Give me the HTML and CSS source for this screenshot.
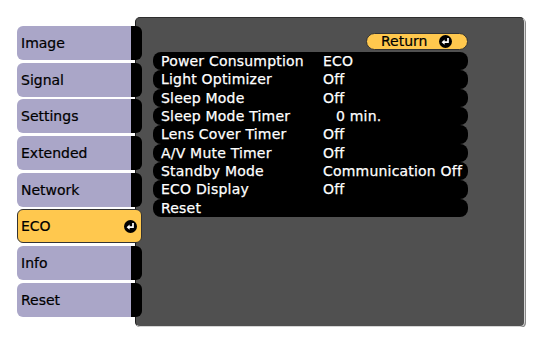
FILE: index.html
```html
<!DOCTYPE html>
<html lang="en">
<head>
  <meta charset="UTF-8">
  <title>ECO Menu</title>
  <link rel="stylesheet" href="styles.css">
</head>
<body>

  <div class="screen">
    <div class="tabs">
      <div class="tab">Image</div>
      <div class="tab">Signal</div>
      <div class="tab">Settings</div>
      <div class="tab">Extended</div>
      <div class="tab">Network</div>
      <div class="tab active">ECO
        <svg class="enter" viewBox="0 0 13 13" width="13" height="13">
          <circle cx="6.5" cy="6.5" r="6.5" fill="#000"/>
          <path d="M9 3 V7.2 H5" fill="none" stroke="#fff" stroke-width="1.7"/>
          <path d="M2.6 7.2 L5.6 4.6 L5.6 9.8 Z" fill="#fff"/>
        </svg>
      </div>
      <div class="tab">Info</div>
      <div class="tab">Reset</div>
    </div>

    <div class="panel">
      <div class="top">
        <div class="return">Return
          <svg class="enter" viewBox="0 0 13 13" width="13" height="13">
            <circle cx="6.5" cy="6.5" r="6.5" fill="#000"/>
            <path d="M9 3 V7.2 H5" fill="none" stroke="#fff" stroke-width="1.7"/>
            <path d="M2.6 7.2 L5.6 4.6 L5.6 9.8 Z" fill="#fff"/>
          </svg>
        </div>
      </div>
      <div class="rows">
        <div class="row"><span class="label">Power Consumption</span><span>ECO</span></div>
        <div class="row"><span class="label">Light Optimizer</span><span>Off</span></div>
        <div class="row"><span class="label">Sleep Mode</span><span>Off</span></div>
        <div class="row"><span class="label">Sleep Mode Timer</span><span class="num">0 min.</span></div>
        <div class="row"><span class="label">Lens Cover Timer</span><span>Off</span></div>
        <div class="row"><span class="label">A/V Mute Timer</span><span>Off</span></div>
        <div class="row"><span class="label">Standby Mode</span><span>Communication Off</span></div>
        <div class="row"><span class="label">ECO Display</span><span>Off</span></div>
        <div class="row"><span class="label">Reset</span><span></span></div>
      </div>
    </div>
  </div>

</body>
</html>
```

FILE: styles.css
```css
body {
  margin: 0;
  background: #fff;
  font-family: 'DejaVu Sans', sans-serif;
  font-size: 14px;
}

.screen {
  display: flex;
  margin: 17px 0 0 17px;
}

.tabs {
  position: relative;
  z-index: 1;
  width: 125px;
  padding-top: 9px;
  display: flex;
  flex-direction: column;
  gap: 2.7px;
}

.tab {
  position: relative;
  height: 34px;
  box-sizing: border-box;
  padding-left: 4px;
  display: flex;
  align-items: center;
  background: #aaa6c8;
  color: #000;
  border-radius: 6px 0 0 6px;
  margin-right: 9px;
  -webkit-text-stroke: 0.2px #000;
}

.tab::after {
  content: "";
  position: absolute;
  top: 0;
  bottom: 0;
  right: -9px;
  width: 11px;
  background: #000;
  border-radius: 0 6px 6px 0;
}

.tab.active {
  margin-right: 0;
  background: #ffc84e;
  border: 1px solid #333;
  border-radius: 6px;
  padding-left: 3px;
}

.tab.active::after {
  display: none;
}

.tab.active .enter {
  margin-left: auto;
  margin-right: 4px;
}

.panel {
  margin-left: -7px;
  width: 390px;
  height: 310px;
  box-sizing: border-box;
  background: #505050;
  border-top: 1px solid #2e2e2e;
  border-left: 1px solid #1c1c1c;
  border-right: 1px solid #d6d6d6;
  border-bottom: 1px solid #d6d6d6;
  border-radius: 5px;
  box-shadow: 1px 1px 0 #8a8a8a;
  padding: 15px 0 0 17px;
}

.top {
  display: flex;
  justify-content: flex-end;
  width: 315px;
}

.return {
  width: 102px;
  height: 17px;
  box-sizing: border-box;
  display: flex;
  align-items: center;
  padding-left: 14px;
  gap: 12px;
  background: #ffc84e;
  border: 1px solid #333;
  border-radius: 9px;
  color: #000;
  line-height: 15px;
  -webkit-text-stroke: 0.2px #000;
}

.rows {
  margin-top: 2px;
  width: 315px;
  display: flex;
  flex-direction: column;
}

.row {
  height: 18.33px;
  line-height: 18.33px;
  display: flex;
  background: #000;
  border-radius: 8px;
  color: #fff;
  padding-left: 8px;
  letter-spacing: 0.2px;
  -webkit-text-stroke: 0.25px #fff;
  white-space: nowrap;
}

.label {
  width: 162px;
}

.num {
  padding-left: 13px;
}
```
